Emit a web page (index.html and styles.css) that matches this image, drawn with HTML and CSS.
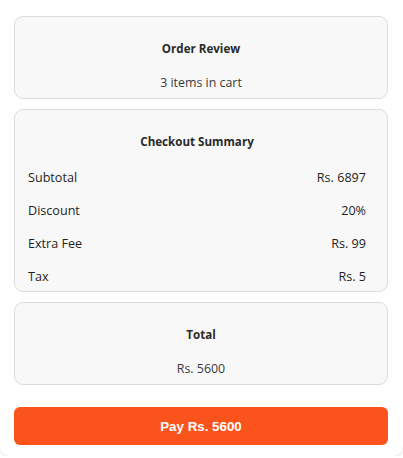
FILE: index.html
```html
<!DOCTYPE html>
<html>
<head>
<meta charset="utf-8">
<link rel="stylesheet" href="styles.css">
</head>
<body>
<div class="page">
  <section class="card card-simple">
    <h3 class="card-title">Order Review</h3>
    <p class="card-sub">3 items in cart</p>
  </section>
  <section class="card card-summary">
    <h3 class="card-title">Checkout Summary</h3>
    <div class="rows">
      <div class="row"><span>Subtotal</span><span>Rs. 6897</span></div>
      <div class="row"><span>Discount</span><span>20%</span></div>
      <div class="row"><span>Extra Fee</span><span>Rs. 99</span></div>
      <div class="row"><span>Tax</span><span>Rs. 5</span></div>
    </div>
  </section>
  <section class="card card-simple">
    <h3 class="card-title">Total</h3>
    <p class="card-sub">Rs. 5600</p>
  </section>
  <button class="pay">Pay Rs. 5600</button>
</div>
</body>
</html>
```
FILE: styles.css
```css
html, body {
  margin: 0;
  padding: 0;
  background: #fff;
}
body {
  font-family: "Open Sans", "Noto Sans", sans-serif;
  color: #222;
}
.page {
  width: 403px;
  height: 456px;
  box-sizing: border-box;
  padding: 16px 15px 0 14px;
  display: flex;
  flex-direction: column;
  gap: 10px;
  border-radius: 0 0 10px 10px;
  box-shadow: 0 1px 3px rgba(0, 0, 0, 0.12);
}
.card {
  background: #f8f8f8;
  border: 1px solid #dcdcdc;
  border-radius: 9px;
  box-sizing: border-box;
}
.card-simple {
  height: 83px;
  padding: 23.5px 14px 0;
  text-align: center;
}
.card-title {
  margin: 0;
  font-size: 11.6px;
  font-weight: 700;
  line-height: 16px;
  color: #2a2a2a;
  text-align: center;
}
.card-sub {
  margin: 17.5px 0 0;
  font-size: 12.4px;
  line-height: 18px;
  color: #3a3a3a;
}
.card-summary {
  height: 183px;
  padding: 24px 21px 0 13px;
}
.rows {
  margin-top: 19px;
  display: flex;
  flex-direction: column;
  gap: 14.9px;
}
.row {
  display: flex;
  justify-content: space-between;
  font-size: 12.6px;
  font-weight: 500;
  line-height: 18px;
  color: #1f1f1f;
}
.pay {
  margin-top: 12px;
  height: 38px;
  border: none;
  border-radius: 6px;
  background: #fa541c;
  color: #fff;
  font-family: "Liberation Sans", Arial, sans-serif;
  font-size: 13.333px;
  font-weight: 700;
}
```
